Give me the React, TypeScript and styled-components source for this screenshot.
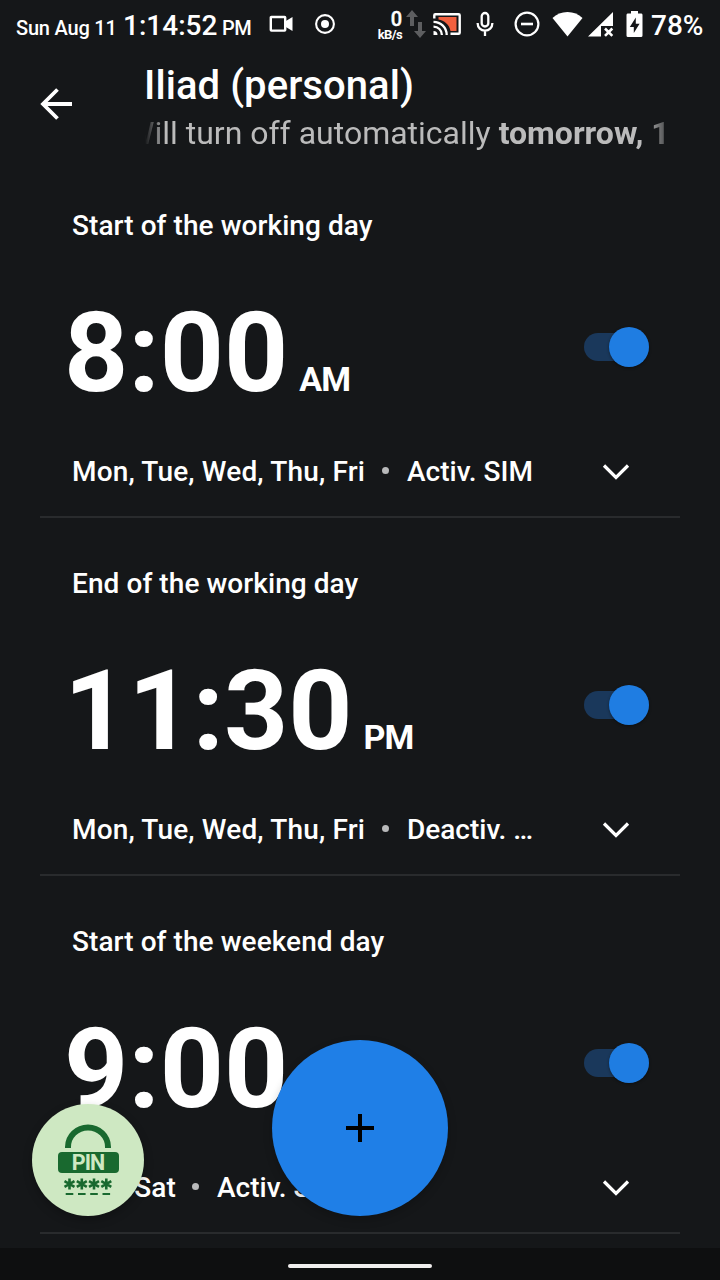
import React from 'react';
import styled, { createGlobalStyle } from 'styled-components';

const GlobalStyle = createGlobalStyle`
  * { box-sizing: border-box; }
  body {
    margin: 0;
    background: #151719;
    font-family: Roboto, "Liberation Sans", sans-serif;
    color: #fff;
  }
`;

const Screen = styled.div`
  position: relative;
  display: flex;
  flex-direction: column;
  width: 720px;
  height: 1280px;
  overflow: hidden;
  background: #151719;
`;

const StatusBar = styled.div`
  flex: none;
  display: flex;
  align-items: center;
  height: 48px;
  padding-left: 16px;
`;

const StatusText = styled.span<{ $size: number; $width: number; $spacing?: number; $drop?: number }>`
  flex: none;
  width: ${p => p.$width}px;
  padding-top: ${p => p.$drop ?? 0}px;
  font-size: ${p => p.$size}px;
  font-weight: 500;
  line-height: 32px;
  letter-spacing: ${p => p.$spacing ?? 0}px;
  white-space: nowrap;
`;

const Clock = styled.div`
  flex: none;
  display: flex;
  align-items: baseline;
  width: 252px;
  padding-top: 5px;
`;

const StatusIcon = styled.svg<{ $gap?: number }>`
  flex: none;
  display: block;
  margin-right: ${p => p.$gap ?? 0}px;
`;

const NetSpeed = styled.div`
  flex: none;
  display: flex;
  flex-direction: column;
  align-items: flex-end;
  width: 66px;
  margin-right: 4px;
  padding-top: 2px;
  font-weight: 700;
`;

const SpeedValue = styled.span`
  font-size: 20px;
  font-weight: 500;
  line-height: 18px;
  -webkit-text-stroke: 0.4px #fff;
`;

const SpeedUnit = styled.span`
  font-size: 13px;
  line-height: 13px;
  letter-spacing: -0.6px;
`;

const Header = styled.header`
  flex: none;
  display: flex;
  height: 112px;
  padding-left: 36px;
`;

const BackButton = styled.button`
  flex: none;
  display: flex;
  align-items: center;
  width: 109px;
  height: 112px;
  padding: 0;
  border: 0;
  background: none;
`;

const Titles = styled.div`
  display: flex;
  flex-direction: column;
  width: 524px;
  padding-top: 14px;
`;

const Title = styled.h1`
  margin: 0 0 0 -1px;
  font-size: 40px;
  font-weight: 500;
  line-height: 48px;
  letter-spacing: 0.07px;
  white-space: nowrap;
`;

const Marquee = styled.div`
  display: flex;
  overflow: hidden;
  height: 46px;
  color: #bbb;
  font-size: 32px;
  line-height: 46px;
  white-space: pre;
  mask-image: linear-gradient(to right, transparent 0, #000 20px, #000 500px, transparent 532px);
`;

const MarqueeText = styled.span`
  margin-left: -19px;
  b { font-weight: 700; }
`;

const AlarmList = styled.main`
  flex: none;
  display: flex;
  flex-direction: column;
  height: 1088px;
  padding: 0 40px;
  overflow: hidden;
`;

const Alarm = styled.section`
  flex: none;
  display: flex;
  flex-direction: column;
  height: 358px;
  padding: 46px 0 0 32px;
  border-bottom: 2px solid #292b2d;
`;

const Label = styled.div`
  height: 40px;
  font-size: 28px;
  font-weight: 500;
  line-height: 40px;
  letter-spacing: 0.07px;
`;

const TimeRow = styled.div`
  display: flex;
  justify-content: space-between;
  align-items: center;
  height: 132px;
  margin-top: 41px;
  padding-right: 31px;
`;

const Time = styled.div`
  display: flex;
  align-items: baseline;
  margin-left: -8px;
  font-size: 112px;
  font-weight: 700;
  line-height: 132px;
  white-space: nowrap;
`;

const Meridiem = styled.span`
  margin-left: 11px;
  font-size: 34px;
  line-height: 40px;
  letter-spacing: -1px;
`;

const Toggle = styled.div`
  display: flex;
  justify-content: flex-end;
  align-items: center;
  width: 65px;
  height: 28px;
  margin-bottom: 12px;
  border-radius: 14px;
  background: #1a385b;
`;

const Thumb = styled.span`
  flex: none;
  width: 40px;
  height: 40px;
  border-radius: 50%;
  background: #1f7de2;
  box-shadow: 0 1px 3px rgba(0, 0, 0, 0.4);
`;

const DetailRow = styled.div`
  display: flex;
  align-items: center;
  height: 40px;
  margin-top: 33px;
  font-size: 28px;
  font-weight: 500;
  line-height: 40px;
  white-space: nowrap;
`;

const Days = styled.span<{ $width: number }>`
  flex: none;
  width: ${p => p.$width}px;
  letter-spacing: 0.16px;
`;

const Dot = styled.span`
  flex: none;
  width: 7px;
  height: 7px;
  margin: 0 18px 3px 17px;
  border-radius: 50%;
  background: #b8b9ba;
`;

const Action = styled.span`
  flex: 1;
`;

const Chevron = styled.svg`
  flex: none;
  margin-right: 50px;
`;

const NavBar = styled.footer`
  flex: none;
  display: flex;
  justify-content: center;
  align-items: center;
  height: 32px;
  padding-top: 4px;
  background: #0e0f10;
`;

const HomeHandle = styled.span`
  width: 144px;
  height: 4px;
  border-radius: 2px;
  background: #f0eeee;
`;

const AddButton = styled.button`
  position: absolute;
  left: 272px;
  top: 1040px;
  display: flex;
  align-items: center;
  justify-content: center;
  width: 176px;
  height: 176px;
  padding: 0;
  border: 0;
  border-radius: 50%;
  background: #1f7fe7;
  box-shadow: 0 4px 10px rgba(0, 0, 0, 0.2);
`;

const PinButton = styled.div`
  position: absolute;
  left: 32px;
  top: 1104px;
  display: flex;
  flex-direction: column;
  align-items: center;
  width: 112px;
  height: 112px;
  padding-top: 20px;
  border-radius: 50%;
  background: #cee8c2;
  box-shadow: 0 4px 10px rgba(0, 0, 0, 0.25);
`;

const PinBadge = styled.span`
  width: 61px;
  height: 21px;
  margin: 4px 0 5px;
  border-radius: 4px;
  background: #19692f;
  color: #cee8c2;
  font-size: 21.5px;
  font-weight: 700;
  line-height: 22px;
  letter-spacing: -1px;
  text-align: center;
`;

const alarms = [
  { label: 'Start of the working day', time: '8:00', half: 'AM', days: 'Mon, Tue, Wed, Thu, Fri', daysWidth: 293, action: 'Activ. SIM' },
  { label: 'End of the working day', time: '11:30', half: 'PM', days: 'Mon, Tue, Wed, Thu, Fri', daysWidth: 293, action: 'Deactiv. …' },
  { label: 'Start of the weekend day', time: '9:00', half: 'AM', days: 'Sun, Sat', daysWidth: 103, action: 'Activ. SIM' },
];

function StatusIcons() {
  return (
    <>
      <StatusIcon $gap={20} width="26" height="24" viewBox="0 0 26 24" fill="none">
        <rect x="2.8" y="5" width="14.4" height="13.6" rx="0.6" stroke="#fff" strokeWidth="2.4" />
        <path d="M17 9.5 24.5 5v14L17 14.5z" fill="#fff" />
      </StatusIcon>
      <StatusIcon width="22" height="24" viewBox="0 0 22 24" fill="none">
        <circle cx="11" cy="12" r="8.9" stroke="#fff" strokeWidth="2.1" />
        <circle cx="11" cy="12" r="4" fill="#fff" />
      </StatusIcon>
      <NetSpeed>
        <SpeedValue>0</SpeedValue>
        <SpeedUnit>kB/s</SpeedUnit>
      </NetSpeed>
      <StatusIcon $gap={6} width="20" height="30" viewBox="0 0 20 30" fill="#5d5e60">
        <path d="M6 1l6 7H8v9H4V8H0zM14 29l-6-7h4v-9h4v9h4z" />
      </StatusIcon>
      <StatusIcon $gap={14} width="30" height="24" viewBox="0 0 30 24" fill="none">
        <path d="M6.5 5h18v14H18.500C17.500 12.500 12 8.500 6.500 7.500z" fill="#f1603f" />
        <path d="M2.300 6.500V3.200Q2.300 2.200 3.300 2.200H26.600Q27.700 2.200 27.700 3.200V20.800Q27.700 21.800 26.600 21.800H18.500" stroke="#fff" strokeWidth="2.400" />
        <path d="M1.500 9.800A13.200 13.200 0 0 1 14.700 23M1.500 14.600A8.400 8.400 0 0 1 9.900 23" stroke="#fff" strokeWidth="2.300" />
        <path d="M1.500 23v-4a4 4 0 0 1 4 4z" fill="#fff" />
      </StatusIcon>
      <StatusIcon $gap={20} width="18" height="26" viewBox="0 0 18 26" fill="none" stroke="#fff" strokeWidth="2.300">
        <rect x="5.700" y="2" width="6.600" height="13.500" rx="3.300" />
        <path d="M1.600 12c0 4.800 3.400 7.600 7.400 7.600s7.400-2.800 7.400-7.600M9 19.400V25" />
      </StatusIcon>
      <StatusIcon $gap={12} width="26" height="26" viewBox="0 0 26 26" fill="none" stroke="#fff" strokeWidth="2.200">
        <circle cx="13" cy="13" r="11.400" />
        <path d="M7 13h12" strokeWidth="2.600" />
      </StatusIcon>
      <StatusIcon $gap={5} width="31" height="26" viewBox="0 0 31 26" fill="#fff">
        <path d="M.5 7C4.500 3 9.500 1 15.500 1s11 2 15 6l-15 18.500z" />
      </StatusIcon>
      <StatusIcon $gap={12} width="26" height="26" viewBox="0 0 26 26">
        <path d="M0 25.500 25 1v14H13v10.500z" fill="#fff" />
        <path d="m17 17.500 7.300 7.300m0-7.300L17 24.800" stroke="#fff" strokeWidth="2.600" />
      </StatusIcon>
      <StatusIcon $gap={8} width="17" height="28" viewBox="0 0 17 28">
        <path d="M1.500 3.500H5V1h7v2.500h3.500Q16.500 3.500 16.500 5v20.500Q16.500 27 15 27H2Q.5 27 .5 25.500V5Q.5 3.500 1.500 3.500z" fill="#fff" />
        <path d="M9.800 7.500 3.800 17h4v6l5.800-9.300H9.800z" fill="#151719" />
      </StatusIcon>
    </>
  );
}

function AlarmCard({ alarm }: { alarm: typeof alarms[number] }) {
  return (
    <Alarm>
      <Label>{alarm.label}</Label>
      <TimeRow>
        <Time>{alarm.time}<Meridiem>{alarm.half}</Meridiem></Time>
        <Toggle><Thumb /></Toggle>
      </TimeRow>
      <DetailRow>
        <Days $width={alarm.daysWidth}>{alarm.days}</Days>
        <Dot />
        <Action>{alarm.action}</Action>
        <Chevron width="28" height="18" viewBox="0 0 28 18" fill="none">
          <path d="m2 2.500 12 12L26 2.500" stroke="#fff" strokeWidth="3.200" />
        </Chevron>
      </DetailRow>
    </Alarm>
  );
}

export default function App() {
  return (
    <Screen>
      <GlobalStyle />
      <StatusBar>
        <Clock>
          <StatusText $size={20} $width={107} $spacing={-0.2}>Sun Aug 11</StatusText>
          <StatusText $size={28} $width={99}>1:14:52</StatusText>
          <StatusText $size={20} $width={36} $spacing={-0.5}>PM</StatusText>
        </Clock>
        <StatusIcons />
        <StatusText $size={28} $width={60} $drop={3}>78%</StatusText>
      </StatusBar>
      <Header>
        <BackButton aria-label="Back">
          <svg width="40" height="40" viewBox="0 0 40 40" fill="none" stroke="#fff" strokeWidth="3.800">
            <path d="M36 20H7M21.500 5.500 7 20l14.500 14.500" />
          </svg>
        </BackButton>
        <Titles>
          <Title>Iliad (personal)</Title>
          <Marquee>
            <MarqueeText>Will turn off automatically <b>tomorrow, 1</b></MarqueeText>
          </Marquee>
        </Titles>
      </Header>
      <AlarmList>
        {alarms.map(a => <AlarmCard key={a.label} alarm={a} />)}
      </AlarmList>
      <NavBar><HomeHandle /></NavBar>
      <AddButton aria-label="Add">
        <svg width="28" height="28" viewBox="0 0 28 28" stroke="#000" strokeWidth="4">
          <path d="M14 0v28M0 14h28" />
        </svg>
      </AddButton>
      <PinButton>
        <svg width="48" height="24" viewBox="0 0 48 24" fill="none">
          <path d="M4 24v-1a20 19.500 0 0 1 40 0v1" stroke="#19692f" strokeWidth="6" />
        </svg>
        <PinBadge>PIN</PinBadge>
        <svg width="50" height="18" viewBox="0 0 50 18" stroke="#19692f">
          {[6.500, 18.800, 31, 43.300].map(x => (
            <g key={x}>
              <path d={`M${x} .5v11M${x - 5} 3.200l10 5.600M${x + 5} 3.200l-10 5.600`} strokeWidth="2.600" />
              <path d={`M${x - 3.800} 16h7.600`} strokeWidth="2" />
            </g>
          ))}
        </svg>
      </PinButton>
    </Screen>
  );
}
